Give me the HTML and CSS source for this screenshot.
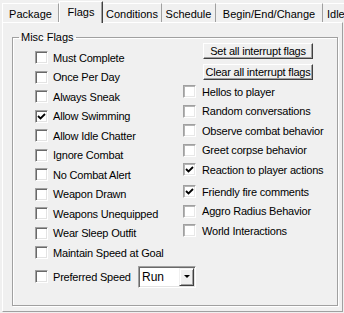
FILE: index.html
```html
<!DOCTYPE html>
<html lang="en">
<head>
    <meta charset="UTF-8">
    <title>Flags</title>
    <link rel="stylesheet" href="styles.css">
</head>
<body>

<div class="tabs">
    <div class="tab tab-package">Package</div>
    <div class="tab tab-flags active">Flags</div>
    <div class="tab tab-conditions">Conditions</div>
    <div class="tab tab-schedule">Schedule</div>
    <div class="tab tab-begin">Begin/End/Change</div>
    <div class="tab tab-idle">Idle</div>
</div>

<div class="page">
    <fieldset class="misc">
        <legend>Misc Flags</legend>
        <div class="cols">
            <div class="col-left">
                <div class="flag"><span class="box"></span>Must Complete</div>
                <div class="flag"><span class="box"></span>Once Per Day</div>
                <div class="flag"><span class="box"></span>Always Sneak</div>
                <div class="flag"><span class="box checked"><svg width="9" height="9" viewBox="0 0 9 9"><polyline points="1,4 3.5,6.5 8,2" /></svg></span>Allow Swimming</div>
                <div class="flag"><span class="box"></span>Allow Idle Chatter</div>
                <div class="flag"><span class="box"></span>Ignore Combat</div>
                <div class="flag"><span class="box"></span>No Combat Alert</div>
                <div class="flag"><span class="box"></span>Weapon Drawn</div>
                <div class="flag"><span class="box"></span>Weapons Unequipped</div>
                <div class="flag"><span class="box"></span>Wear Sleep Outfit</div>
                <div class="flag"><span class="box"></span>Maintain Speed at Goal</div>
                <div class="flag speed">
                    <span class="box"></span>
                    <span class="speed-label">Preferred Speed</span>
                    <div class="select">
                        <span class="select-value">Run</span>
                        <span class="drop"><span class="arrow"></span></span>
                    </div>
                </div>
            </div>
            <div class="col-right">
                <button class="btn btn-set">Set all interrupt flags</button>
                <button class="btn btn-clear">Clear all interrupt flags</button>
                <div class="flag first-right"><span class="box soft"></span>Hellos to player</div>
                <div class="flag"><span class="box soft"></span>Random conversations</div>
                <div class="flag"><span class="box soft"></span>Observe combat behavior</div>
                <div class="flag"><span class="box soft"></span>Greet corpse behavior</div>
                <div class="flag"><span class="box soft checked"><svg width="9" height="9" viewBox="0 0 9 9"><polyline points="1,4 3.5,6.5 8,2" /></svg></span>Reaction to player actions</div>
                <div class="flag friendly"><span class="box soft checked"><svg width="9" height="9" viewBox="0 0 9 9"><polyline points="1,4 3.5,6.5 8,2" /></svg></span>Friendly fire comments</div>
                <div class="flag"><span class="box soft"></span>Aggro Radius Behavior</div>
                <div class="flag"><span class="box soft"></span>World Interactions</div>
            </div>
        </div>
    </fieldset>
</div>

</body>
</html>
```

FILE: styles.css
```css
body {
    margin: 0;
    width: 344px;
    height: 313px;
    overflow: hidden;
    background-color: #f0f0f0;
    font-family: 'Liberation Sans', Arial, sans-serif;
    font-size: 11px;
    color: #000;
}

/* Tab strip */
.tabs {
    display: flex;
    align-items: flex-start;
    height: 22px;
    padding-left: 2px;
    position: relative;
    z-index: 1;
}

.tab {
    box-sizing: border-box;
    flex: none;
    height: 19px;
    margin-top: 3px;
    padding-top: 2px;
    line-height: 16px;
    text-align: center;
    white-space: nowrap;
    border-top: 1px solid #fff;
    border-right: 1px solid #a0a0a0;
}

.tab-package {
    width: 57px;
    border-left: 1px solid #fff;
}

.tab-flags { width: 44px; }
.tab-conditions { width: 59px; }
.tab-schedule { width: 54px; }
.tab-begin { width: 107px; }

.tab-idle {
    width: 34px;
    padding-left: 4px;
    text-align: left;
}

.tab.active {
    height: 22px;
    margin-top: 1px;
    padding-top: 2px;
    background-color: #f0f0f0;
    border-left: 1px solid #fff;
    border-right: 1px solid #404040;
    box-shadow: inset -1px 0 0 #a0a0a0;
}

/* Tab page */
.page {
    box-sizing: border-box;
    width: 341px;
    height: 290px;
    margin-left: 2px;
    padding: 8px 0 0 9px;
    border-top: 1px solid #fff;
    border-left: 1px solid #fff;
    border-right: 1px solid #a0a0a0;
    border-bottom: 1px solid #a0a0a0;
}

.misc {
    box-sizing: border-box;
    width: 326px;
    height: 275px;
    margin: 0;
    padding: 0;
    border: 1px solid #a0a0a0;
    box-shadow: 1px 1px 0 #fff, inset 1px 1px 0 #fff;
}

.misc legend {
    margin-left: 6px;
    padding: 0 2px;
    line-height: 13px;
}

.cols {
    display: grid;
    grid-template-columns: 148px 1fr;
    padding-left: 22px;
}

.col-left {
    padding-top: 4px;
}

/* Checkbox rows */
.flag {
    display: flex;
    align-items: center;
    height: 19.5px;
    letter-spacing: -0.2px;
    white-space: nowrap;
}

.box {
    box-sizing: border-box;
    flex: none;
    display: flex;
    align-items: center;
    justify-content: center;
    width: 13px;
    height: 13px;
    margin-right: 5px;
    background-color: #fff;
    border: 1px solid;
    border-color: #a0a0a0 #fff #fff #a0a0a0;
    box-shadow: inset 1px 1px 0 #696969, inset -1px -1px 0 #e3e3e3;
}

.box.soft {
    margin-right: 6px;
    box-shadow: inset 1px 1px 0 #b4b4b4, inset -1px -1px 0 #e8e8e8;
}

.box svg polyline {
    fill: none;
    stroke: #000;
    stroke-width: 1.8;
}

.first-right {
    margin-top: 2px;
}

.friendly {
    margin-top: 2.5px;
}

/* Buttons */
.btn {
    display: block;
    box-sizing: border-box;
    width: 110px;
    height: 16px;
    margin-left: 20px;
    padding: 0;
    font-family: inherit;
    font-size: 11px;
    line-height: 12px;
    letter-spacing: -0.2px;
    color: #000;
    background-color: #f0f0f0;
    border: 1px solid;
    border-color: #fff #404040 #404040 #fff;
    box-shadow: inset -1px -1px 0 #a0a0a0;
}

.btn-set {
    margin-top: -1px;
}

.btn-clear {
    margin-top: 5px;
}

/* Preferred speed dropdown */
.flag.speed {
    height: 22px;
    margin-top: 3px;
}

.speed-label {
    flex: none;
    width: 85px;
}

.select {
    box-sizing: border-box;
    flex: none;
    display: flex;
    align-items: center;
    justify-content: space-between;
    width: 58px;
    height: 22px;
    background-color: #fff;
    border: 1px solid;
    border-color: #a0a0a0 #fff #fff #a0a0a0;
    box-shadow: inset 1px 1px 0 #696969, inset -1px -1px 0 #e3e3e3;
    padding: 1px;
    letter-spacing: 0;
}

.select-value {
    padding-left: 2px;
    font-size: 12px;
}

.drop {
    box-sizing: border-box;
    display: flex;
    align-items: center;
    justify-content: center;
    width: 15px;
    height: 18px;
    background-color: #f0f0f0;
    border: 1px solid;
    border-color: #f0f0f0 #404040 #404040 #f0f0f0;
    box-shadow: inset 1px 1px 0 #fff, inset -1px -1px 0 #a0a0a0;
}

.arrow {
    width: 0;
    height: 0;
    border-left: 3px solid transparent;
    border-right: 3px solid transparent;
    border-top: 3px solid #000;
}
```
